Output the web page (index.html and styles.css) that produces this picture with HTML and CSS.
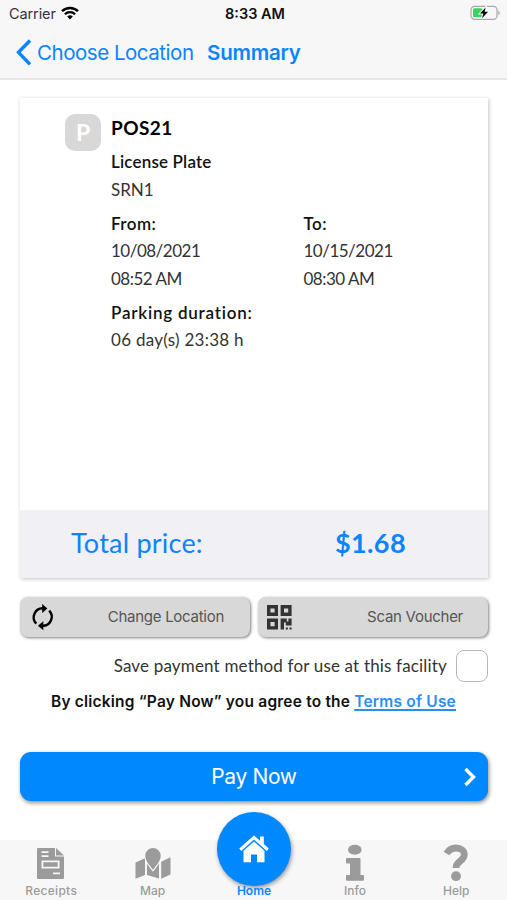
FILE: index.html
```html
<!DOCTYPE html>
<html lang="en">
<head>
    <meta charset="UTF-8">
    <meta name="viewport" content="width=device-width, initial-scale=1.0">
    <title>Summary</title>
    <link rel="stylesheet" href="styles.css">
</head>
<body>
    <div class="screen">

        <div class="header">
            <div class="status">
                <div class="carrier">
                    <span class="carrier-name">Carrier</span>
                    <svg width="18" height="14" viewBox="0 0 18 14">
                        <path d="M1 5.2a11.5 11.5 0 0 1 16 0" fill="none" stroke="#000" stroke-width="2.4"/>
                        <path d="M3.9 8.3a7.2 7.2 0 0 1 10.2 0" fill="none" stroke="#000" stroke-width="2.3"/>
                        <path d="M9 13.6l-2.8-3a4 4 0 0 1 5.6 0z"/>
                    </svg>
                </div>
                <div class="time">8:33 AM</div>
                <div class="battery">
                    <svg width="31" height="16" viewBox="0 0 31 16">
                        <rect x="1" y="1.3" width="26" height="13" rx="3.6" fill="none" stroke="#a9a9aa" stroke-width="1.2"/>
                        <path d="M28.3 5.5a2.7 2.7 0 0 1 0 4.8z" fill="#a9a9aa"/>
                        <rect x="3" y="3.3" width="9.5" height="9" rx="1.6" fill="#39d162"/>
                        <path d="M15.6 2.6L10 8.6h3.4L12 13.2l6-6.4h-3.4z" stroke="#f7f7f7" stroke-width="2" paint-order="stroke"/>
                    </svg>
                </div>
            </div>
            <div class="nav">
                <svg width="17" height="27" viewBox="0 0 17 27">
                    <path d="M15 1.5L3.500 13.3 15 25.400" fill="none" stroke="#0a84ff" stroke-width="3.4"/>
                </svg>
                <span class="back">Choose Location</span>
                <span class="title">Summary</span>
            </div>
        </div>

        <div class="card">
            <div class="details">
                <div class="parking">P</div>
                <div class="info">
                    <div class="place">POS21</div>
                    <div class="label">License Plate</div>
                    <div class="value">SRN1</div>
                    <div class="dates">
                        <div>
                            <div class="label short">From:</div>
                            <div class="value date">10/08/2021</div>
                            <div class="value date">08:52 AM</div>
                        </div>
                        <div>
                            <div class="label short">To:</div>
                            <div class="value date">10/15/2021</div>
                            <div class="value date">08:30 AM</div>
                        </div>
                    </div>
                    <div class="label parktime">Parking duration:</div>
                    <div class="value days">06 day(s) 23:38 h</div>
                </div>
            </div>
            <div class="total">
                <span class="total-label">Total price:</span>
                <span class="price">$1.68</span>
            </div>
        </div>

        <div class="actions">
            <div class="btn change">
                <svg width="26" height="28" viewBox="0 0 26 28" fill="none" stroke="#000" stroke-width="2.4">
                    <path d="M6.3 20.6A9 9 0 0 1 13 5.3"/>
                    <path d="M19.2 7.6A9 9 0 0 1 12.5 22.8"/>
                    <path d="M12.2 1l5.2 4.4-5.2 4.5z" fill="#000" stroke="none"/>
                    <path d="M13.3 18.2v9l-5.4-4.5z" fill="#000" stroke="none"/>
                </svg>
                <span>Change Location</span>
            </div>
            <div class="btn scan">
                <svg width="25" height="25" viewBox="0 0 25 25" fill="#333">
                    <path fill-rule="evenodd" d="M0 0h11v11H0zM3.4 3.4v4.2h4.2V3.4z"/>
                    <path fill-rule="evenodd" d="M13.6 0h11v11h-11zM17 3.4v4.2h4.2V3.4z"/>
                    <path fill-rule="evenodd" d="M0 13.6h11v11H0zM3.4 17v4.2h4.2V17z"/>
                    <path d="M13.6 13.6h6.2v3h1.6v-3h3.2v7h-5.8v-3H17v7h-3.4zM18.8 22.4h2.1v2.1h-2.1zM22.5 22.4h2.1v2.1h-2.1z"/>
                </svg>
                <span>Scan Voucher</span>
            </div>
        </div>

        <label class="save">
            <span>Save payment method for use at this facility</span>
            <input type="checkbox" class="check">
        </label>

        <div class="terms">By clicking “Pay Now” you agree to the <a href="#">Terms of Use</a></div>

        <div class="pay">
            <span class="pay-text">Pay Now</span>
            <svg class="arrow" width="14" height="20" viewBox="0 0 14 20">
                <path d="M2.5 2l8 8-8 8" fill="none" stroke="#fff" stroke-width="3.4"/>
            </svg>
        </div>

        <div class="tabbar">
            <div class="tab receipts">
                <svg width="28" height="32" viewBox="0 0 28 32" fill="#9b9b9b">
                    <path fill-rule="evenodd" d="M2 1h16v8.5h9V31q0 1-1 1H1q-1 0-1-1V2q0-1 1-1zM4.5 4.3v1.6h7V4.3zM4.5 8.3v1.6h7V8.3zM4.500 13.5v8h18v-8zM16 25.6v1.7h7v-1.7z"/>
                    <path d="M19 1l8 7.5h-8zM6.300 15.300h14.400v4.400H6.300z"/>
                </svg>
                <span>Receipts</span>
            </div>
            <div class="tab map">
                <svg width="36" height="32" viewBox="0 0 36 32" fill="#9b9b9b">
                    <path d="M.5 15.500l9.500-4.200V28L.5 31.700zM12 14l6 10 6-10v17.500L12 28zM26.200 14.700l9.300-4.400v17.200l-9.300 4.200z"/>
                    <path d="M18 22.800c-3-4.200-7.700-8.300-7.700-14.200a7.700 7.600 0 0 1 15.400 0c0 5.900-4.700 10-7.700 14.200z" stroke="#f7f7f7" stroke-width="2.400" paint-order="stroke"/>
                </svg>
                <span>Map</span>
            </div>
            <div class="tab home">
                <div class="circle">
                    <svg width="32" height="30" viewBox="0 0 32 30" fill="#fff">
                        <path d="M16 1.500l6 5.200V2.500h3.800v7.600l5 4.500-2 2.300L16 5.600 3.200 16.900l-2-2.300z"/>
                        <path d="M16 7.500l10.500 9.200v11.500h-7.500v-7.700h-6v7.700H5.500V16.700z"/>
                    </svg>
                </div>
                <span>Home</span>
            </div>
            <div class="tab tall">
                <svg width="20" height="38" viewBox="0 0 20 38" fill="#9b9b9b">
                    <ellipse cx="9.800" cy="5.800" rx="6.800" ry="5"/>
                    <path d="M2 14h12.500q1 0 1 1v16H18q1 0 1 1v3.800q0 1-1 1H2q-1 0-1-1V32q0-1 1-1h3V19.500H2q-1 0-1-1V15q0-1 1-1z"/>
                </svg>
                <span>Info</span>
            </div>
            <div class="tab tall">
                <svg width="26" height="38" viewBox="0 0 26 38">
                    <path d="M3.500 9.500C6 5.500 9 4 13 4c5 0 8.300 2.700 8.300 6.600 0 7-8.300 6-8.300 13.400" fill="none" stroke="#9b9b9b" stroke-width="6.800"/>
                    <circle cx="13" cy="32.200" r="4.900" fill="#9b9b9b"/>
                </svg>
                <span>Help</span>
            </div>
        </div>

    </div>
</body>
</html>
```
FILE: styles.css
```css
* {
box-sizing: border-box;
}

body {
margin: 0;
background-color: #fff;
font-family: Inter, "Liberation Sans", sans-serif;
}

svg {
display: block;
flex: none;
}

.screen {
width: 507px;
height: 900px;
display: flex;
flex-direction: column;
overflow: hidden;
white-space: nowrap;
}

.header {
height: 80px;
background-color: #f7f7f7;
border-bottom: 2px solid #e7e7e7;
}
.status {
height: 26px;
padding: 0 6px 0 9px;
display: grid;
grid-template-columns: 1fr auto 1fr;
align-items: center;
font-size: 14.5px;
color: #111;
}
.carrier {
display: flex;
align-items: center;
gap: 5px;
}
.carrier-name {
color: #333;
letter-spacing: -0.1px;
}
.time {
font-weight: 600;
}
.battery {
justify-self: end;
}
.nav {
height: 52px;
padding-left: 15px;
display: flex;
align-items: center;
color: #0a84ff;
font-size: 20.5px;
}
.back {
margin-left: 5px;
width: 170px;
letter-spacing: -0.47px;
}
.title {
font-weight: 600;
letter-spacing: -0.2px;
}

.card {
width: 468px;
height: 480px;
margin: 18px 0 0 20px;
display: flex;
flex-direction: column;
box-shadow: 1px 1px 4px rgba(0, 0, 0, 0.24);
font-family: Lato, sans-serif;
}
.details {
flex: 1;
display: flex;
padding: 16px 0 0 45px;
}
.parking {
width: 36px;
height: 37px;
border-radius: 10px;
background-color: #d8d8d8;
color: #fff;
font-size: 23px;
font-weight: bold;
line-height: 37px;
text-align: center;
}
.info {
margin-left: 10px;
color: #333;
font-size: 17px;
line-height: 27.5px;
}
.place {
color: #000;
font-size: 19px;
font-weight: bold;
letter-spacing: 0.4px;
}
.label {
margin-top: 6.6px;
color: #111;
font-weight: 600;
letter-spacing: 0.17px;
}
.short {
letter-spacing: 0.45px;
}
.parktime {
letter-spacing: 0.78px;
}
.date {
letter-spacing: -0.5px;
}
.days {
letter-spacing: 0.27px;
}
.dates {
display: grid;
grid-template-columns: 192.5px 150px;
}
.total {
height: 68px;
padding: 0 82px 3px 51px;
display: flex;
justify-content: space-between;
align-items: center;
background-color: #f0f0f5;
color: #0a84ff;
font-size: 27px;
}
.total-label {
letter-spacing: 0.22px;
}
.price {
font-weight: bold;
letter-spacing: 0.4px;
}

.actions {
display: flex;
gap: 8px;
margin: 19px 0 0 20px;
}
.btn {
width: 230px;
height: 40px;
display: flex;
justify-content: space-between;
align-items: center;
padding: 0 26px 0 10px;
border-radius: 8px;
background-color: #d8d8d8;
color: #555;
font-size: 15px;
letter-spacing: -0.27px;
box-shadow: 1px 1px 3px rgba(0, 0, 0, 0.5);
}
.btn span {
margin-bottom: 1px;
}
.scan {
padding: 0 25px 0 9px;
}

.save {
height: 32px;
margin: 13px 19px 0 0;
display: flex;
justify-content: flex-end;
align-items: center;
gap: 9px;
color: #333;
font-family: Lato, sans-serif;
font-size: 17px;
letter-spacing: 0.17px;
}
.save span {
margin-bottom: 2px;
}
.check {
appearance: none;
width: 32px;
height: 32px;
margin: 0;
border: 1.5px solid #b8b8b8;
border-radius: 8px;
background-color: #fff;
}

.terms {
margin: 10px 0 0 51px;
line-height: 20px;
font-size: 15.5px;
font-weight: 600;
letter-spacing: 0.2px;
color: #111;
}
.terms a {
color: #2b8cf5;
text-decoration-thickness: 2px;
text-underline-offset: 2px;
}

.pay {
width: 468px;
height: 49px;
margin: 40px 0 0 20px;
padding: 0 11px;
display: grid;
grid-template-columns: 1fr auto 1fr;
align-items: center;
border-radius: 11px;
background-color: #0088ff;
color: #fff;
font-size: 21px;
box-shadow: 1px 2px 4px rgba(0, 0, 0, 0.45);
}
.pay-text {
grid-column: 2;
letter-spacing: -0.35px;
}
.arrow {
justify-self: end;
}

.tabbar {
height: 60px;
margin-top: auto;
display: grid;
grid-template-columns: repeat(5, 1fr);
background-color: #f7f7f7;
color: #9b9b9b;
font-size: 12px;
font-weight: 500;
}
.tab {
height: 60px;
display: flex;
flex-direction: column;
align-items: center;
justify-content: flex-end;
padding: 0 0 2px 1px;
}
.tab svg {
margin-bottom: 5px;
}
.tab span {
line-height: 14px;
z-index: 1;
}
.receipts {
letter-spacing: 0.3px;
}
.tab.tall svg {
margin-bottom: 2px;
}
.tab.tall {
padding-left: 0;
}
.home {
color: #0088ff;
font-weight: 600;
}
.circle {
width: 74px;
height: 74px;
flex: none;
display: flex;
align-items: center;
justify-content: center;
margin-bottom: -2px;
border-radius: 50%;
background-color: #0088ff;
box-shadow: 1px 2px 4px rgba(0, 0, 0, 0.4);
}
.tab .circle svg {
margin: 0;
}
```
